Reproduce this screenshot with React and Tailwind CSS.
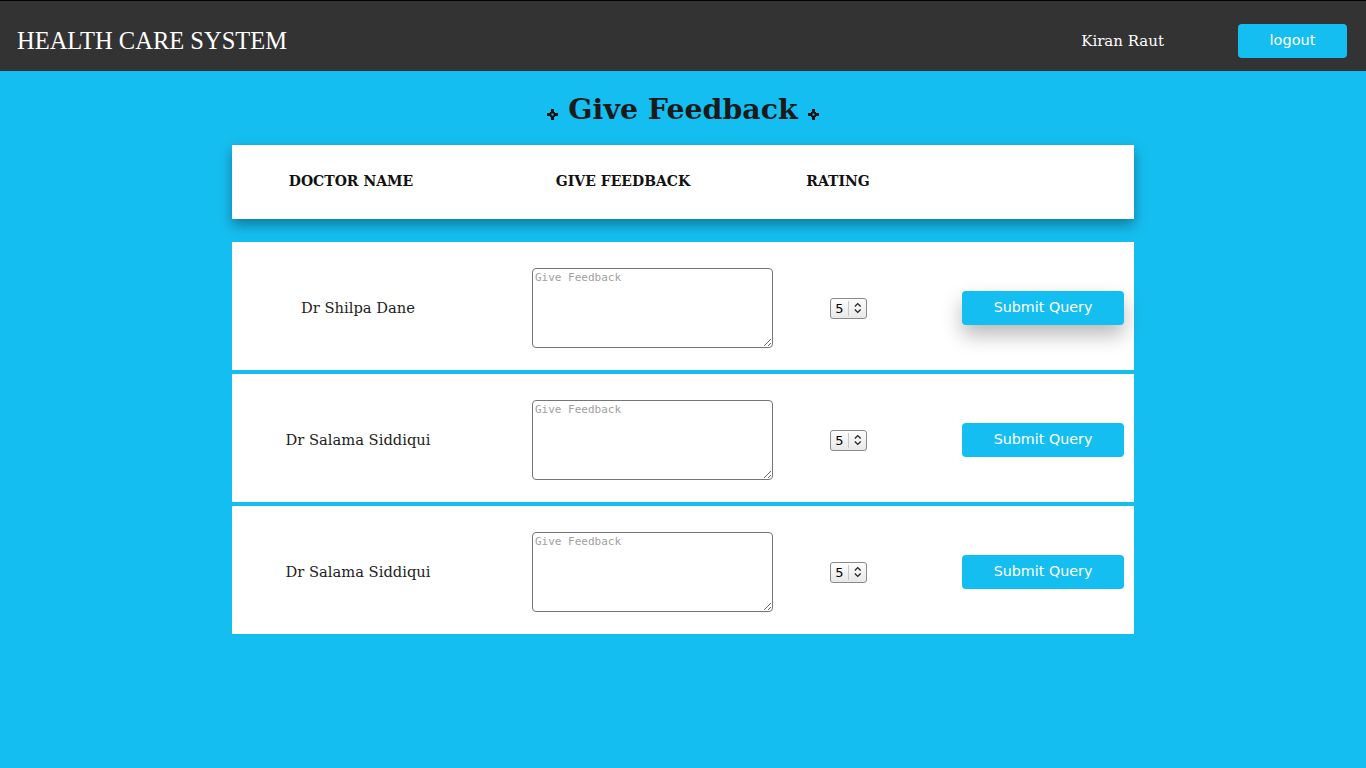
import React from 'react';

const doctors = ['Dr Shilpa Dane', 'Dr Salama Siddiqui', 'Dr Salama Siddiqui'];

// small cross marks next to the page title
function Mark() {
  return (
    <svg width="11" height="11" viewBox="0 0 11 11" className="inline-block mt-[10px]">
      <path d="M4 0h3v3.5h-3zM0 4h3.5v3H0zM7.5 4H11v3H7.5zM4 7.5h3V11h-3z" fill="#111" />
      <path d="M3 3h5v5H3z" fill="#111" />
      <path d="M4.5 4.5h2v2h-2z" fill="#15bef0" />
    </svg>
  );
}

function RatingSelect() {
  return (
    <div className="flex items-center h-[21px] w-[37px] rounded-[3px] border border-[#8a8a8a] bg-gradient-to-b from-[#fdfdfd] to-[#e8e8e8] text-[13px] text-black" style={{ fontFamily: '"DejaVu Sans", sans-serif' }}>
      <span className="w-[17px] text-center leading-none">5</span>
      <span className="h-[15px] w-px bg-[#c8c8c8]" />
      <svg width="18" height="14" viewBox="0 0 18 14">
        <path d="M6 5.5L9 2.5L12 5.5M6 8.5L9 11.5L12 8.5" fill="none" stroke="#222" strokeWidth="1.3" />
      </svg>
    </div>
  );
}

function Row({ name, hovered }) {
  return (
    <div className="flex items-center h-[128px] pt-[4px] bg-white">
      <div className="w-[252px] text-center text-[14.7px] text-[#222]">{name}</div>
      <textarea
        placeholder="Give Feedback"
        className="ml-[48px] w-[241px] h-[80px] border border-[#767676] rounded-[4px] px-[2px] py-[1px] text-[11px] placeholder:text-[#a0a0a0] resize-y bg-white"
        style={{ fontFamily: '"DejaVu Sans Mono", monospace' }}
      />
      <div className="ml-[57px]">
        <RatingSelect />
      </div>
      <button
        className={`ml-[95px] w-[162px] h-[34px] rounded-[4px] bg-[#15bef0] text-white text-[14.3px] ${hovered ? 'shadow-[0_10px_20px_rgba(0,0,0,0.28)]' : ''}`}
        style={{ fontFamily: '"DejaVu Sans", sans-serif' }}
      >
        Submit Query
      </button>
    </div>
  );
}

export default function App() {
  return (
    <div className="min-h-[768px] bg-[#15bef0]" style={{ fontFamily: '"DejaVu Serif", serif' }}>
      {/* navbar */}
      <div className="h-[71px] bg-[#333333] border-t border-black flex items-center pt-[10px]">
        <div className="pl-[17px] text-[24.5px] text-white" style={{ fontFamily: '"Liberation Serif", serif' }}>HEALTH CARE SYSTEM</div>
        <div className="ml-auto text-white text-[15px]">Kiran Raut</div>
        <button className="ml-[74px] mr-[19px] w-[109px] h-[34px] rounded-[4px] bg-[#15bef0] text-white text-[14.5px]" style={{ fontFamily: '"DejaVu Sans", sans-serif' }}>
          logout
        </button>
      </div>

      <div className="flex items-center justify-center gap-[10px] pt-[19px] pb-[17px]">
        <Mark />
        <h1 className="text-[28.4px] font-bold text-[#1a1a1a] leading-[38px]">Give Feedback</h1>
        <Mark />
      </div>

      <div className="w-[902px] mx-auto">
        <div className="flex items-center h-[74px] pb-[2px] bg-white shadow-[0_6px_12px_rgba(0,0,0,0.35)] text-[14px] font-bold text-[#111]">
          <div className="w-[238px] text-center">DOCTOR NAME</div>
          <div className="w-[306px] text-center">GIVE FEEDBACK</div>
          <div className="w-[124px] text-center">RATING</div>
        </div>

        <div className="mt-[23px] flex flex-col gap-[4px]">
          {doctors.map((d, i) => (
            <Row key={i} name={d} hovered={i === 0} />
          ))}
        </div>
      </div>
    </div>
  );
}
